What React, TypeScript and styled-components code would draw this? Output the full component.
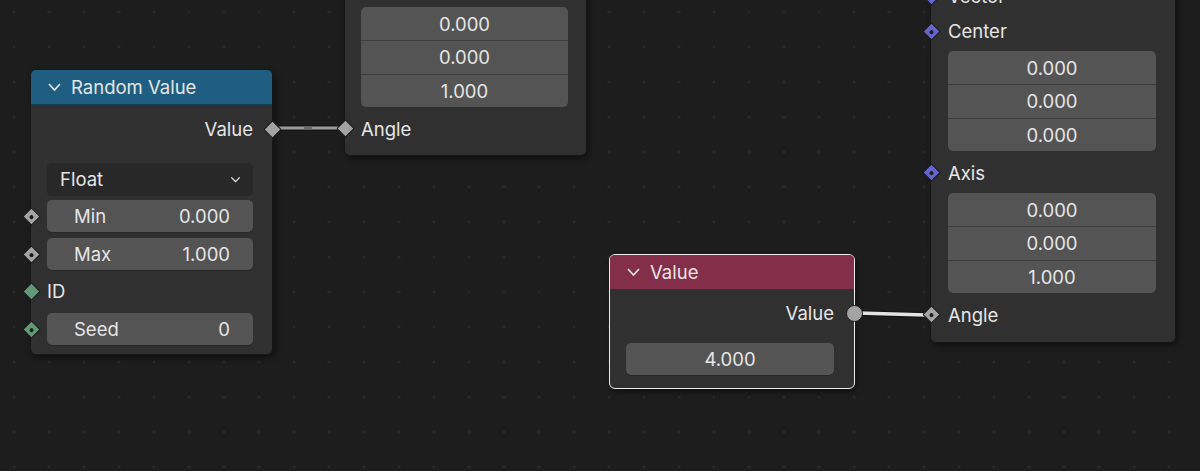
import { FC } from 'react';
import styled, { createGlobalStyle, css } from 'styled-components';

const GlobalStyle = createGlobalStyle`
  html, body {
    margin: 0;
    padding: 0;
    background: #1d1d1d;
  }
  body {
    font-family: Inter, 'Noto Sans', sans-serif;
  }
`;

const Canvas = styled.div`
  position: relative;
  width: 1200px;
  height: 471px;
  overflow: hidden;
  background-color: #1d1d1d;
  background-image: radial-gradient(circle, #2b2b2b 1px, transparent 1.6px);
  background-size: 35px 35px;
  background-position: -3.5px -5.5px;
  font-size: 18.5px;
  color: #e6e6e6;
`;

const Links = styled.svg`
  position: absolute;
  inset: 0;
  width: 1200px;
  height: 471px;
`;

const Node = styled.div<{ $x: number; $y: number; $w: number; $selected?: boolean }>`
  position: absolute;
  left: ${(p) => p.$x}px;
  top: ${(p) => p.$y}px;
  width: ${(p) => p.$w}px;
  box-sizing: border-box;
  background: #303030;
  border-radius: 6px;
  border: 1px solid #171717;
  box-shadow: 2px 3px 6px rgba(0, 0, 0, 0.45);
  ${(p) =>
    p.$selected &&
    css`
      border: 1.5px solid #ececec;
    `}
`;

const Header = styled.div<{ $color: string }>`
  height: 34px;
  display: flex;
  align-items: center;
  gap: 10px;
  padding-left: 17px;
  background: ${(p) => p.$color};
  border-radius: 5px 5px 0 0;
  border-bottom: 1px solid rgba(0, 0, 0, 0.35);
`;

const Chevron = styled.svg<{ $small?: boolean }>`
  width: ${(p) => (p.$small ? 11 : 13)}px;
  height: ${(p) => (p.$small ? 7 : 8)}px;
  overflow: visible;
  path {
    stroke: #e6e6e6;
    stroke-width: 1.6;
    fill: none;
  }
`;

const Body = styled.div<{ $top: number; $left: number; $right: number; $bottom: number }>`
  display: flex;
  flex-direction: column;
  padding: ${(p) => `${p.$top}px ${p.$right}px ${p.$bottom}px ${p.$left}px`};
`;

const Row = styled.div<{ $gap?: number; $align?: 'left' | 'right'; $h?: number }>`
  position: relative;
  height: ${(p) => p.$h ?? 30}px;
  margin-top: ${(p) => p.$gap ?? 0}px;
  display: flex;
  align-items: center;
  justify-content: ${(p) => (p.$align === 'right' ? 'flex-end' : 'flex-start')};
`;

const Socket = styled.span<{ $side: 'left' | 'right'; $offset: number; $color: string; $dot?: boolean; $round?: boolean }>`
  position: absolute;
  top: 50%;
  ${(p) => (p.$side === 'left' ? `left: ${-p.$offset}px;` : `right: ${-p.$offset}px;`)}
  width: ${(p) => (p.$round ? 15 : 11)}px;
  height: ${(p) => (p.$round ? 15 : 11)}px;
  margin-top: ${(p) => (p.$round ? -8.5 : -6.5)}px;
  margin-${(p) => p.$side}: ${(p) => (p.$round ? -8.5 : -6.5)}px;
  background: ${(p) => p.$color};
  border: 1px solid #1a1a1a;
  border-radius: ${(p) => (p.$round ? '50%' : '1px')};
  transform: ${(p) => (p.$round ? 'none' : 'rotate(45deg)')};
  &::after {
    content: '';
    display: ${(p) => (p.$dot ? 'block' : 'none')};
    position: absolute;
    left: 50%;
    top: 50%;
    width: 4px;
    height: 4px;
    margin: -2px 0 0 -2px;
    border-radius: 50%;
    background: #1c1c1c;
  }
`;

const Field = styled.div<{ $gap?: number }>`
  position: relative;
  height: 32px;
  margin-top: ${(p) => p.$gap ?? 0}px;
  background: #545454;
  border-radius: 5px;
  display: flex;
  align-items: center;
  justify-content: space-between;
  padding: 0 23px 0 27px;
  box-shadow: 0 1px 0 rgba(0, 0, 0, 0.2);
`;

const Select = styled(Field)`
  background: #282828;
  padding: 0 12px 0 13px;
`;

const VectorField = styled.div<{ $gap?: number }>`
  margin-top: ${(p) => p.$gap ?? 0}px;
  display: flex;
  flex-direction: column;
  border-radius: 5px;
  overflow: hidden;
  background: #545454;
`;

const VectorCell = styled.div`
  box-sizing: border-box;
  height: 33.34px;
  display: flex;
  align-items: center;
  justify-content: center;
  & + & {
    border-top: 1px solid #3d3d3d;
  }
`;

const CenterField = styled(Field)`
  justify-content: center;
  padding: 0;
`;

const DropChevron: FC = () => (
  <Chevron $small viewBox='0 0 13 8'>
    <path d='M1.5 1.5 L6.5 6.5 L11.5 1.5' />
  </Chevron>
);

const HeaderChevron: FC = () => (
  <Chevron viewBox='0 0 13 8'>
    <path d='M1 1 L6.5 7 L12 1' />
  </Chevron>
);

const GRAY = '#a3a3a3';
const GREEN = '#5f9a75';
const PURPLE = '#6464cc';

const RandomValueNode: FC = () => (
  <Node $x={30} $y={69} $w={243}>
    <Header $color='#1f5e80'>
      <HeaderChevron />
      <span>Random Value</span>
    </Header>
    <Body $top={8} $left={16} $right={19} $bottom={9}>
      <Row $align='right' $h={32}>
        Value
        <Socket $side='right' $offset={19} $color={GRAY} />
      </Row>
      <Select $gap={18}>
        <span>Float</span>
        <DropChevron />
      </Select>
      <Field $gap={5}>
        <Socket $side='left' $offset={16} $color={GRAY} $dot />
        <span>Min</span>
        <span>0.000</span>
      </Field>
      <Field $gap={6}>
        <Socket $side='left' $offset={16} $color={GRAY} $dot />
        <span>Max</span>
        <span>1.000</span>
      </Field>
      <Row $gap={6}>
        <Socket $side='left' $offset={16} $color={GREEN} />
        ID
      </Row>
      <Field $gap={7}>
        <Socket $side='left' $offset={16} $color={GREEN} $dot />
        <span>Seed</span>
        <span>0</span>
      </Field>
    </Body>
  </Node>
);

const AngleNode: FC = () => (
  <Node $x={344} $y={-12} $w={243}>
    <Body $top={18} $left={16} $right={18} $bottom={11}>
      <VectorField>
        <VectorCell>0.000</VectorCell>
        <VectorCell>0.000</VectorCell>
        <VectorCell>1.000</VectorCell>
      </VectorField>
      <Row $gap={7}>
        <Socket $side='left' $offset={16} $color={GRAY} />
        Angle
      </Row>
    </Body>
  </Node>
);

const ValueNode: FC = () => (
  <Node $x={609} $y={254} $w={246} $selected>
    <Header $color='#842f4a'>
      <HeaderChevron />
      <span>Value</span>
    </Header>
    <Body $top={8} $left={16} $right={20} $bottom={13}>
      <Row $align='right'>
        Value
        <Socket $side='right' $offset={20} $color={GRAY} $round />
      </Row>
      <CenterField $gap={15}>4.000</CenterField>
    </Body>
  </Node>
);

const RotateNode: FC = () => (
  <Node $x={930} $y={-30} $w={246}>
    <Body $top={10} $left={17} $right={19} $bottom={12}>
      <Row>
        <Socket $side='left' $offset={17} $color={PURPLE} $dot />
        Vector
      </Row>
      <Row $gap={5}>
        <Socket $side='left' $offset={17} $color={PURPLE} $dot />
        Center
      </Row>
      <VectorField $gap={5}>
        <VectorCell>0.000</VectorCell>
        <VectorCell>0.000</VectorCell>
        <VectorCell>0.000</VectorCell>
      </VectorField>
      <Row $gap={7}>
        <Socket $side='left' $offset={17} $color={PURPLE} $dot />
        Axis
      </Row>
      <VectorField $gap={5}>
        <VectorCell>0.000</VectorCell>
        <VectorCell>0.000</VectorCell>
        <VectorCell>1.000</VectorCell>
      </VectorField>
      <Row $gap={7}>
        <Socket $side='left' $offset={17} $color={GRAY} $dot />
        Angle
      </Row>
    </Body>
  </Node>
);

export default function App() {
  return (
    <>
      <GlobalStyle />
      <Canvas>
        <Links viewBox='0 0 1200 471'>
          <line x1={278} y1={128} x2={340} y2={128} stroke='#161616' strokeWidth={5.5} />
          <line x1={278} y1={128} x2={340} y2={128} stroke='#9c9c9c' strokeWidth={3} />
          <line x1={304} y1={128} x2={312} y2={128} stroke='#6a6a6a' strokeWidth={3} />
          <line x1={858} y1={313} x2={926} y2={315} stroke='#161616' strokeWidth={6} />
          <line x1={858} y1={313} x2={926} y2={315} stroke='#e4e4e4' strokeWidth={3.5} />
        </Links>
        <AngleNode />
        <RandomValueNode />
        <ValueNode />
        <RotateNode />
      </Canvas>
    </>
  );
}
